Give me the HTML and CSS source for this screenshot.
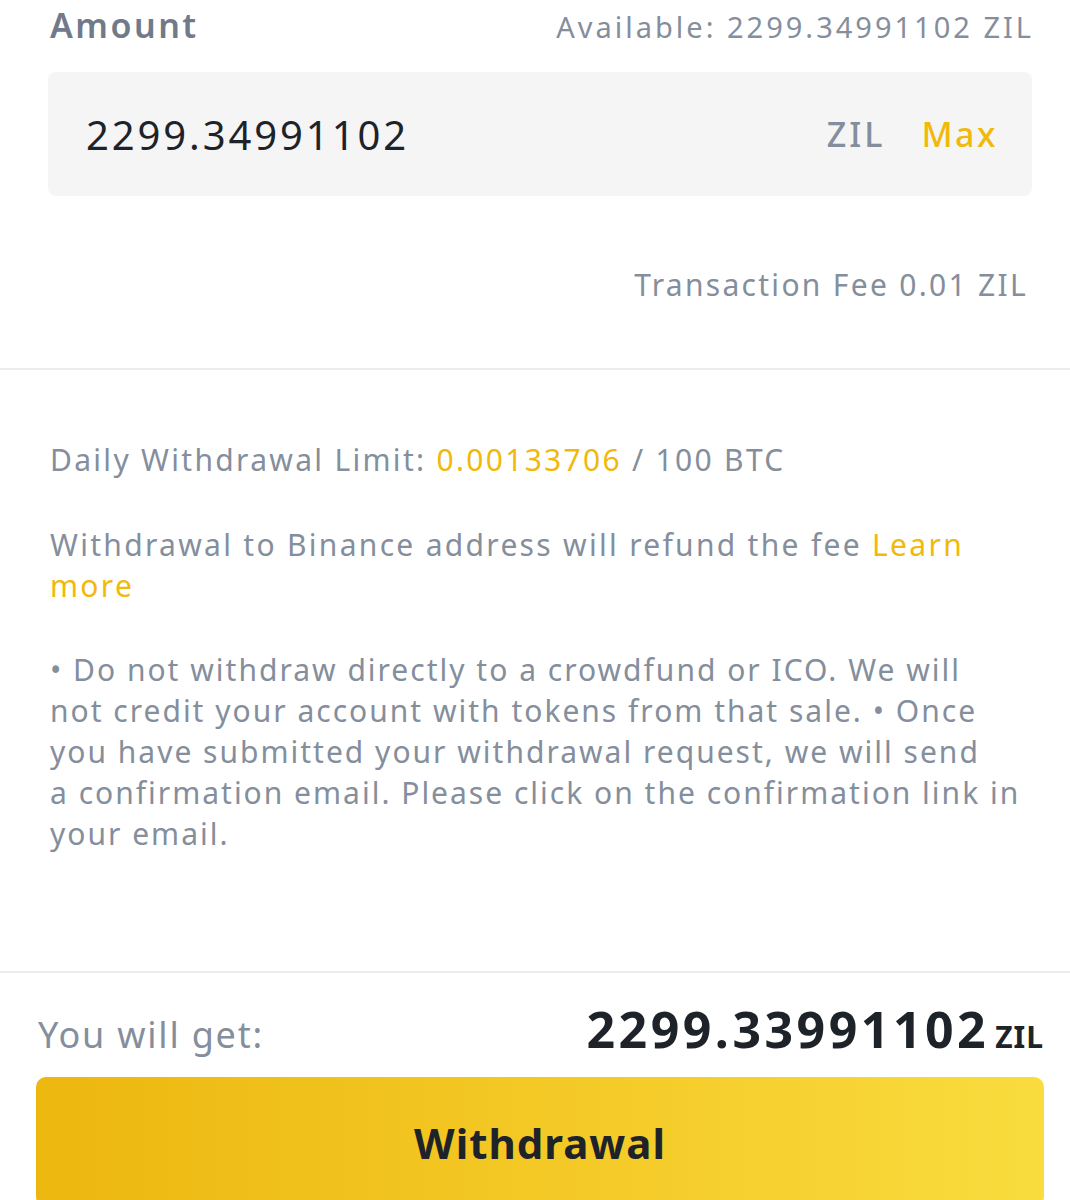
FILE: index.html
```html
<!DOCTYPE html>
<html lang="en">
<head>
    <meta charset="UTF-8">
    <meta name="viewport" content="width=device-width, initial-scale=1.0">
    <title>Withdraw ZIL</title>
    <link rel="stylesheet" href="styles.css">
</head>
<body>

<div class="amount-block">
    <div class="amount-head">
        <span class="amount-label">Amount</span>
        <span class="available">Available: 2299.34991102 ZIL</span>
    </div>
    <div class="amount-input">
        <span class="amount-value">2299.34991102</span>
        <span class="unit">ZIL</span>
        <span class="max">Max</span>
    </div>
    <div class="fee">Transaction Fee <span class="fee-num">0.01</span> ZIL</div>
</div>

<div class="info-block">
    <p class="limit">Daily Withdrawal Limit: <span class="hl">0.00133706</span> / 100 BTC</p>
    <p class="refund">Withdrawal to Binance address will refund the fee <span class="hl">Learn</span> <span class="hl">more</span></p>
    <p class="notes">• Do not withdraw directly to a crowdfund or ICO. We will not credit your account with tokens from that sale. • Once you have submitted your withdrawal request, we will send a&nbsp;confirmation email. Please click on the confirmation link in your email.</p>
</div>

<div class="footer">
    <div class="get-row">
        <span class="get-label">You will get:</span>
        <span class="get-value">2299.33991102<span class="get-unit">ZIL</span></span>
    </div>
    <button class="withdraw-btn" type="button">Withdrawal</button>
</div>

</body>
</html>
```

FILE: styles.css
```css
body {
    margin: 0;
    background-color: #ffffff;
    font-family: "Noto Sans", "Open Sans", sans-serif;
    color: #848e9c;
}

.amount-block {
    padding: 0 38px 0 48px;
    border-bottom: 2px solid #eaecef;
    height: 370px;
    box-sizing: border-box;
}

.amount-head {
    display: flex;
    justify-content: space-between;
    align-items: baseline;
    height: 70px;
    padding-top: 2px;
}

.amount-label {
    font-size: 34px;
    font-weight: 600;
    letter-spacing: 2.5px;
    color: #707a8a;
    margin-left: 2px;
}

.available {
    font-size: 29px;
    letter-spacing: 3px;
    color: #848e9c;
    margin-right: -2px;
}

.amount-input {
    display: flex;
    align-items: center;
    height: 124px;
    background-color: #f5f5f5;
    border-radius: 8px;
    padding: 0 36px 0 38px;
}

.amount-value {
    flex: 1;
    font-size: 40px;
    letter-spacing: 2.9px;
    color: #1e2329;
}

.unit {
    font-size: 34px;
    font-weight: 500;
    letter-spacing: 3px;
    color: #848e9c;
    margin-right: 36px;
}

.max {
    font-size: 34px;
    font-weight: 500;
    letter-spacing: 2.5px;
    color: #f0b90b;
    margin-right: -2px;
}

.fee {
    text-align: right;
    font-size: 30px;
    letter-spacing: 2.3px;
    color: #848e9c;
    margin-top: 68px;
    padding-right: 4px;
}

.info-block {
    padding: 69px 49px 0 50px;
    height: 603px;
    box-sizing: border-box;
    border-bottom: 2px solid #eaecef;
}

.info-block p {
    margin: 0;
    font-size: 30px;
    line-height: 41px;
    letter-spacing: 2.3px;
    color: #848e9c;
}

.hl {
    color: #f0b90b;
}

.info-block .refund {
    margin-top: 44px;
    padding-right: 11px;
}

.info-block .notes {
    margin-top: 43px;
    letter-spacing: 2px;
}

.footer {
    padding: 0 26px 0 36px;
}

.get-row {
    display: flex;
    justify-content: space-between;
    align-items: baseline;
    height: 104px;
    padding-top: 22px;
    box-sizing: border-box;
}

.get-label {
    font-size: 36px;
    letter-spacing: 1.8px;
    color: #848e9c;
    margin-left: 2px;
}

.get-value {
    font-size: 50px;
    font-weight: 700;
    letter-spacing: 3.5px;
    color: #1e2329;
}

.get-unit {
    font-size: 30px;
    letter-spacing: 1px;
    margin-left: 6px;
}

.withdraw-btn {
    display: block;
    width: 1008px;
    height: 130px;
    border: none;
    border-radius: 10px;
    background: linear-gradient(90deg, #ecb70f 0%, #f5cc2a 60%, #f9dc3e 100%);
    font-family: "Noto Sans", sans-serif;
    font-size: 42px;
    font-weight: 700;
    letter-spacing: 1px;
    color: #1e2329;
    padding: 0;
    text-align: center;
}
```
